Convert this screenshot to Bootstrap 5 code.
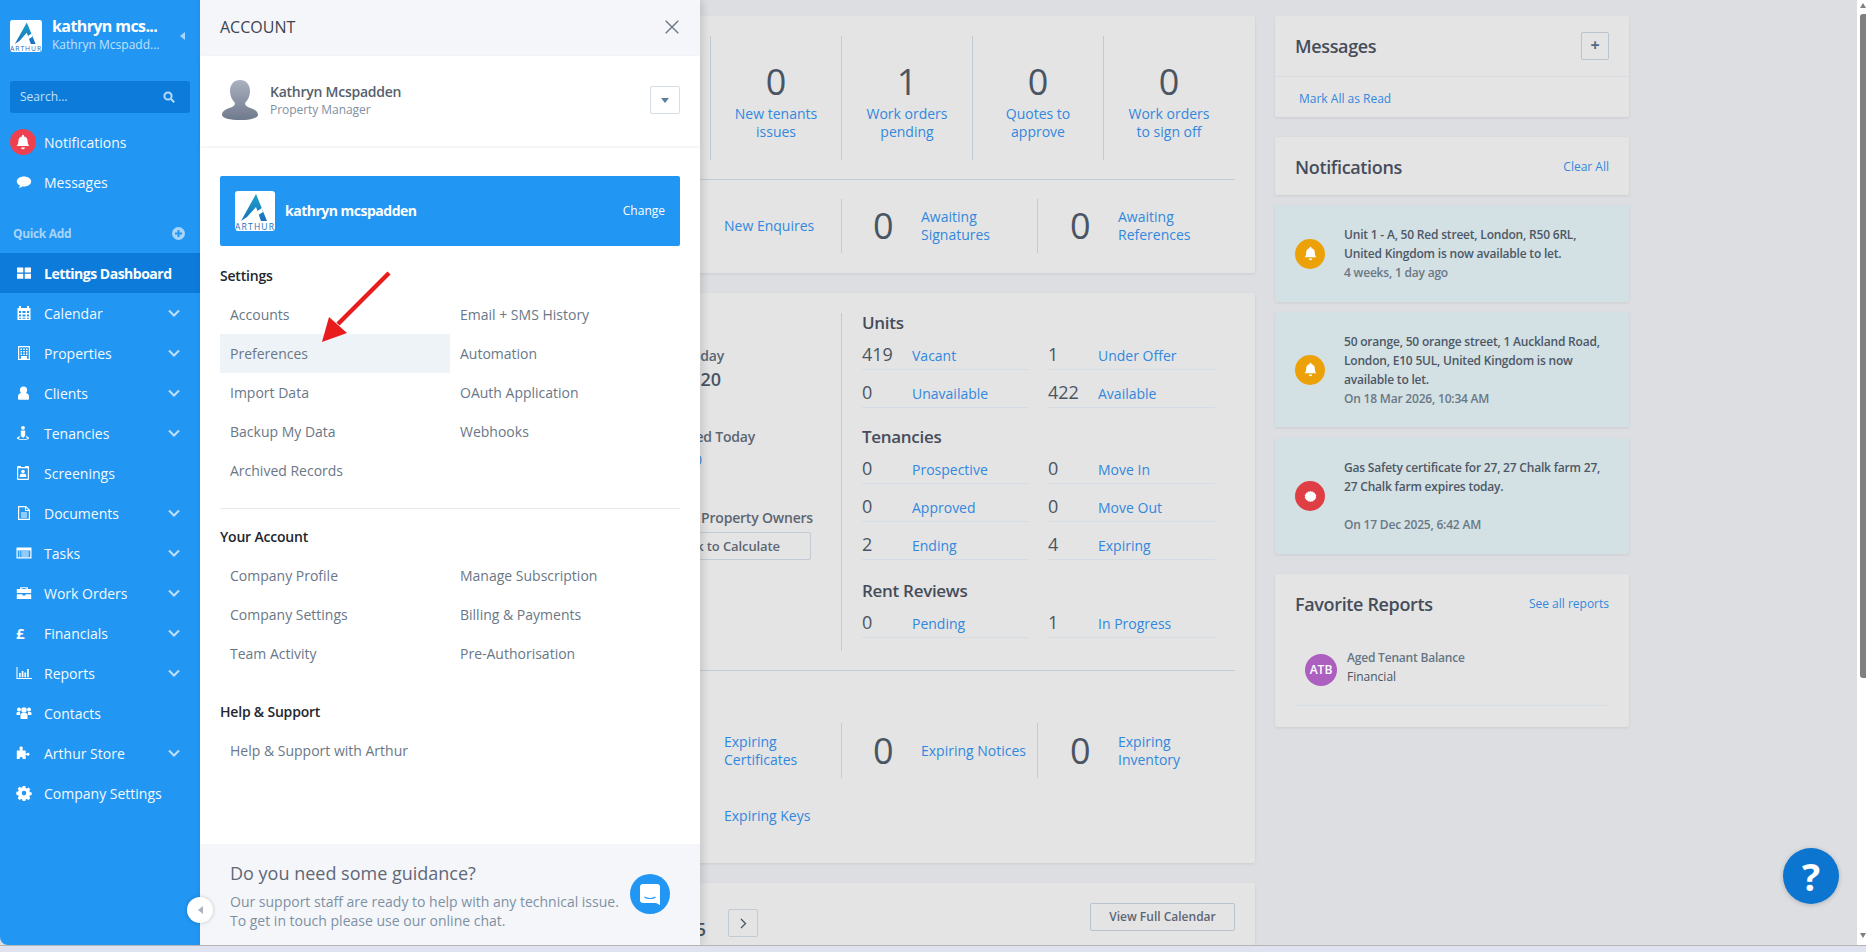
<!DOCTYPE html>
<html lang="en">
<head>
<meta charset="utf-8">
<title>Lettings Dashboard</title>
<link href="https://cdn.jsdelivr.net/npm/bootstrap@5.3.0/dist/css/bootstrap.min.css" rel="stylesheet">
<style>
html,body{height:100%;overflow:hidden}
body{background:#dfe3f0;font-family:"Open Sans","Liberation Sans",sans-serif;font-size:14px;color:#4a5462}
a{text-decoration:none}
.app-shell{height:946px;border-bottom:1px solid #b5b5b5;background:#dcdee1;position:relative;overflow:hidden}
.side-nav{width:200px;height:945px;background:#2196f3;border-bottom-left-radius:8px;color:#f4faff;flex:none}
.brand-row{height:81px;padding:20px 0 0 10px}
.brand-name{font-size:16px;font-weight:700;line-height:20px;margin-top:-4px;color:#fff;letter-spacing:-.6px}
.brand-sub{font-size:12px;line-height:18px;color:#c2e2fb}
.brand-text{margin-left:10px;width:120px}
.side-caret{width:0;height:0;border:4px solid transparent;border-right:5px solid #a9d6fa;border-left:0;margin:12px 0 0 8px}
.side-search{margin:0 10px;height:32px;background:#0c7bd9;border-radius:3px;padding:0 15px 0 10px;font-size:12px;color:#c2e2fb}
.side-item{height:40px;padding-left:16px;color:#f4faff;font-size:14px}
.side-item .ico{width:16px;height:16px;fill:#fff;flex:none;margin-right:12px}
.side-item .chev{width:12px;height:8px;fill:none;stroke:#bfe0fb;stroke-width:2;margin-left:auto;margin-right:20px}
.pound-ico{width:16px;margin-right:12px;font-weight:700;font-size:15px;color:#fff;line-height:16px}
.bell-dot{width:26px;height:26px;border-radius:50%;background:#ef4050;margin:0 8px 0 -6px;flex:none}
.bell-dot svg{width:16px;height:16px;fill:#fff}
.quick-row{height:21px;margin:21px 0 9px;padding:0 15px 0 13px;font-size:12px;font-weight:700;color:#a8d4f8;letter-spacing:-.35px}
.quick-plus{width:13px;height:13px}
.active-item{background:#0c7bd9;font-weight:700;color:#fff;letter-spacing:-.5px}
.gap-notif{padding-top:9px}
.collapse-dot{position:absolute;left:187px;top:897px;width:26px;height:26px;border-radius:50%;background:#fff;box-shadow:0 0 4px rgba(0,0,0,.2);z-index:20}
.collapse-dot i{display:block;width:0;height:0;border:4px solid transparent;border-right:5px solid #a9b2bd;border-left:0}
.account-pane{position:absolute;left:200px;top:0;width:500px;height:945px;background:#fff;z-index:10;box-shadow:3px 0 8px rgba(0,0,0,.13)}
.pane-head{height:56px;background:#f5f6fa;padding:0 21px 3px 20px;font-size:16px;color:#3d4350}
.close-x{width:14px;height:14px;stroke:#6e7683;stroke-width:1.4;fill:none}
.pane-user{height:90px;padding:0 20px 2px 22px;box-shadow:0 1px 3px rgba(0,0,0,.07)}
.user-pic{width:36px;height:40px;margin-right:12px}
.user-name{font-weight:600;font-size:14px;line-height:19px;color:#565f6e;letter-spacing:-.25px}
.user-role{font-size:12px;line-height:17px;color:#7e90a2;letter-spacing:-.05px}
.drop-btn{width:30px;height:28px;border:1px solid #d5dde6;border-radius:2px}
.drop-btn i{width:0;height:0;border:4.5px solid transparent;border-top:5px solid #5f7d99;border-bottom:0}
.org-banner{margin:30px 20px 0;height:70px;background:#2196f3;border-radius:2px;padding:0 15px;color:#fff}
.org-name{font-weight:700;margin:-2px 0 0 10px;letter-spacing:-.5px}
.org-change{margin-left:auto;font-size:12px}
.pane-body{padding:0 20px}
.pane-title{font-weight:600;color:#22262d;line-height:20px;letter-spacing:-.2px}
.settings-title{margin-top:20px}
.link-grid{margin-top:9px}
.pane-link{height:39px;padding-left:10px;color:#6a7787;width:230px}
.pane-link.is-hover{background:#edf3f7}
.pane-rule{margin:18px 0 18px;border-top:1px solid #e4e8ec}
.help-title{margin-top:29px}
.help-link{margin-top:9px}
.pane-foot{height:101px;background:#f5f6fa;padding:16px 30px 0 30px;position:absolute;left:0;right:0;bottom:0}
.foot-title{font-size:18px;line-height:26px;color:#5f6877}
.foot-text{font-size:14px;line-height:19px;color:#7e91a3;margin-top:6px;white-space:nowrap}
.chat-dot{width:40px;height:40px;border-radius:50%;background:#2196f3;margin-top:14px}
.mark-arrow{position:absolute;left:310px;top:262px;width:90px;height:90px;z-index:15}
.dash-area{padding:16px 0 0 16px;gap:20px}
.panel-box{background:#e4e4e4;border-radius:2px;box-shadow:0 1px 3px rgba(0,0,0,.08)}
.main-col{width:1039px;flex:none;gap:20px}
.tile-row{height:124px;margin-right:1px}
.tile-cell{width:131px;border-left:1px solid #c2cad6;text-align:center;padding-top:23px;flex:none}
.big-num{font-size:36px;font-weight:400;line-height:46px;color:#4a5462}
.blue-link{color:#3288de;line-height:18px}
.box-rule{border-top:1px solid #c2cad6;margin:19px 0}
.stat-row{height:54px}
.stat-lead{width:605px;padding-left:488px;flex:none}
.stat-cell{border-left:1px solid #c2cad6;padding-left:32px}
.stat-cell .big-num{width:48px;flex:none}
.w-196{width:196px;flex:none;padding-left:31px}
.left-figs{width:605px;height:338px;flex:none;text-align:right}
.fig-label{font-weight:600;line-height:20px;color:#5d6673;letter-spacing:-.2px}
.fig-value{font-size:18px;font-weight:600;line-height:24px;color:#4a5462}
.fig-a{margin-top:33px;padding-right:117px}
.fig-b{padding-right:120px;margin-top:1px}
.fig-c{margin-top:36px;padding-right:86px}
.fig-d{margin-top:3px;padding-right:139px;line-height:20px}
.fig-e{margin-top:38px;padding-right:28px}
.fig-f{margin:4px 30px 0 0;width:220px;height:28px;border:1px solid #c2cad6;border-radius:2px;padding:0 30px 0 0;font-size:13px;font-weight:600;line-height:26px;color:#5d6673;margin-left:auto;letter-spacing:-.1px}
.right-figs{border-left:1px solid #c2cad6;padding:1px 0 0 20px;width:395px;height:338px}
.sec-head{font-size:17px;font-weight:600;line-height:18px;color:#454d5a;letter-spacing:-.3px}
.sec-grid{display:grid;grid-template-columns:166px 167px;column-gap:20px}
.sec-top{margin-top:20px}
.sec-last{margin:22px 0 0}
.sec-row{height:38px;border-bottom:1px solid #d5dce4;padding-top:10px;display:flex;align-items:baseline}
.sec-row b{font-size:18px;font-weight:400;width:50px;flex:none;line-height:24px;color:#4a5462}
.bottom-row{height:55px;margin-top:52px}
.keys-line{padding-left:488px;margin-top:27px;padding-bottom:37px}
.cal-box{padding:20px;height:120px}
.cal-date{width:470px;text-align:right;font-size:18px;font-weight:600;margin-top:14px;line-height:24px}
.cal-next{width:30px;height:28px;border:1px solid #c2cad6;border-radius:2px;margin:6px 0 0 22px;color:#4a5462}
.cal-next svg{width:7px;height:11px;stroke:#4a5462;fill:none;stroke-width:1.3}
.cal-view{width:145px;height:28px;border:1px solid #b9c2cd;border-radius:2px;font-size:12px;font-weight:600;color:#5d6673;margin-left:auto}
.right-col{width:354px;flex:none}
.box-head{height:61px;padding:0 20px;border-bottom:1px solid #d9dde2}
.box-title{font-size:18px;font-weight:600;color:#454d5a;letter-spacing:-.35px}
.plus-btn{width:28px;height:28px;border:1px solid #b9c4d0;border-radius:2px;color:#4f6d8a;font-weight:700;font-size:16px;line-height:24px}
.mini-link{font-size:12px;color:#3288de}
.mark-line{height:40px;padding:3px 0 0 24px}
.note-box{margin-top:20px;padding:2px 20px 0;height:58px}
.note-card{background:#d3e0e4;border-radius:2px;box-shadow:0 1px 3px rgba(0,0,0,.08);margin-top:10px;padding:0 20px;gap:19px;font-size:12px;line-height:19px;font-weight:600;color:#4d5866;letter-spacing:-.2px}
.note-dot{width:30px;height:30px;border-radius:50%;flex:none}
.note-dot svg{width:15px;height:15px;fill:#fff}
.note-dot svg.burst{width:13px;height:13px}
.dot-amber{background:#eba107}
.dot-red{background:#e03e45}
.note-time{color:#6a7885}
.gap-time{margin-top:19px}
.h-97{height:97px}.h-115{height:115px}.h-116{height:116px;margin-top:11px}
.fav-box{margin-top:20px;height:153px;padding:0 20px}
.fav-head{height:60px}
.fav-item{height:72px;border-bottom:1px solid #d5dce4;padding-left:10px}
.fav-ava{width:32px;height:32px;border-radius:50%;background:#ad5fbf;color:#fff;font-size:12px;font-weight:600;margin-right:10px}
.fav-copy{margin-top:-6px}
.fav-name{font-size:12px;font-weight:600;color:#667585;line-height:19px;letter-spacing:-.2px}
.fav-type{font-size:12px;line-height:19px;color:#4a5462}
.help-fab{position:absolute;left:1783px;top:848px;width:56px;height:56px;border-radius:50%;background:#0b75d0;color:#fff;font-size:38px;font-weight:700;z-index:5;box-shadow:0 1px 5px rgba(0,0,0,.2)}
.fake-bar{position:absolute;right:0;top:0;bottom:0;width:9px;background:#fff;z-index:6}
.bar-thumb{position:absolute;left:3px;right:0;top:14px;height:664px;background:#808080;border-radius:3px 0 0 3px}
.bar-up,.bar-down{position:absolute;right:0;width:0;height:0;border:3px solid transparent}
.bar-up{top:3px;border-bottom:5px solid #808080;border-top:0}
.bar-down{top:933px;border-top:5px solid #808080;border-bottom:0}
</style>
</head>
<body>
<div class="app-shell d-flex">

<nav class="side-nav d-flex flex-column">
  <div class="brand-row d-flex">
    <svg width="32" height="32" viewBox="0 0 40 40"><defs><linearGradient id="lg" x1="0" y1="0" x2="0" y2="1"><stop offset="0" stop-color="#1aa3c9"/><stop offset="1" stop-color="#1b6fc0"/></linearGradient></defs><rect width="40" height="40" rx="3" fill="#fff"/><path d="M21 3 32 30H26L21 16 12 26 6 30Z" fill="url(#lg)"/><path d="M9 29 27 17 28 21 14 30Z" fill="#fff"/><text x="0" y="38.500" font-size="8.500" fill="#1b6fc0" font-family="Open Sans" textLength="39">ARTHUR</text></svg>
    <div class="brand-text"><div class="brand-name">kathryn mcs...</div><div class="brand-sub">Kathryn Mcspadd...</div></div>
    <i class="side-caret"></i>
  </div>
  <div class="side-search d-flex align-items-center justify-content-between"><span>Search...</span>
    <svg width="12" height="12" viewBox="0 0 12 12" fill="none" stroke="#b6dcfa" stroke-width="2"><circle cx="5" cy="5" r="3.6"/><path d="M8 8l3.2 3.2"/></svg></div>
  <div class="gap-notif">
    <a class="side-item d-flex align-items-center" href="#"><span class="bell-dot d-flex align-items-center justify-content-center"><svg viewBox="0 0 16 16"><path d="M8 .8a1 1 0 0 1 1 1v.7a4.6 4.6 0 0 1 3.6 4.6c0 3 .9 4.2 1.9 5H1.500c1-.8 1.900-2 1.900-5A4.600 4.600 0 0 1 7 2.500v-.7a1 1 0 0 1 1-1zM6.100 13.400h3.800a1.900 1.900 0 0 1-3.800 0z"/></svg></span>Notifications</a>
    <a class="side-item d-flex align-items-center" href="#"><svg class="ico" viewBox="0 0 16 16"><path d="M8 2.500c4 0 7.200 2.200 7.200 5s-3.200 5-7.200 5c-.6 0-1.100 0-1.600-.1-1 .9-2.300 1.400-3.800 1.600.8-.8 1.200-1.600 1.300-2.500C2 10.600.8 9.200.8 7.500c0-2.800 3.200-5 7.200-5z"/></svg>Messages</a>
  </div>
  <div class="quick-row d-flex align-items-center justify-content-between"><span>Quick Add</span>
    <svg class="quick-plus" viewBox="0 0 13 13"><circle cx="6.500" cy="6.500" r="6.500" fill="#a8d4f8"/><path d="M3 6.500h7M6.500 3v7" stroke="#2196f3" stroke-width="2"/></svg></div>
  <a class="side-item active-item d-flex align-items-center" href="#"><svg class="ico" viewBox="0 0 16 16"><path d="M1 2.500h6.300v5H1zM8.700 2.500H15v5H8.700zM1 8.800h6.300v5H1zM8.700 8.800H15v5H8.700z"/></svg>Lettings Dashboard</a>
  <a class="side-item d-flex align-items-center" href="#"><svg class="ico" viewBox="0 0 16 16"><path fill-rule="evenodd" d="M3 1h2v2h6V1h2v2h1.500v12h-13V3H3zM3 6v2h2V6zm3.500 0v2h3V6zM11 6v2h2V6zM3 9.500v2h2v-2zm3.500 0v2h3v-2zm4.500 0v2h2v-2zM3 12.700v1h2v-1zm3.500 0v1h3v-1zm4.500 0v1h2v-1z"/></svg>Calendar<svg class="chev" viewBox="0 0 12 8"><path d="M1 1.500l5 5 5-5"/></svg></a>
  <a class="side-item d-flex align-items-center" href="#"><svg class="ico" viewBox="0 0 16 16"><path fill-rule="evenodd" d="M2 1h12v14H2zm1.200 1.200v11.600h9.600V2.200zM4.500 3.500h1.500V5H4.500zm2.700 0h1.600V5H7.200zm2.800 0h1.500V5H10zM4.500 6h1.500v1.500H4.500zm2.700 0h1.600v1.500H7.200zM10 6h1.500v1.500H10zM4.500 8.500h1.500V10H4.500zm2.700 0h1.600V10H7.200zm2.800 0h1.500V10H10zM5 11h6v2.800H5z"/></svg>Properties<svg class="chev" viewBox="0 0 12 8"><path d="M1 1.500l5 5 5-5"/></svg></a>
  <a class="side-item d-flex align-items-center" href="#"><svg class="ico" viewBox="0 0 16 16"><circle cx="7.500" cy="5" r="3.600"/><path d="M2 14v-2.500C2 9.300 3.600 8 5.500 8h4C11.400 8 13 9.300 13 11.500V14c0 .5-.3.800-.8.800H2.800C2.300 14.800 2 14.500 2 14z"/></svg>Clients<svg class="chev" viewBox="0 0 12 8"><path d="M1 1.500l5 5 5-5"/></svg></a>
  <a class="side-item d-flex align-items-center" href="#"><svg class="ico" viewBox="0 0 16 16"><circle cx="7" cy="2.800" r="1.900"/><path d="M4.800 5.500h4.400v6H8v1H6v-1H4.800z"/><path d="M4 11.300C2.300 11.700 1 12.400 1 13.300c0 1 2.700 1.800 6 1.800s6-.8 6-1.800c0-.9-1.300-1.600-3-2v1c.8.200 1.500.5 1.500 1 0 .5-2 1-4.500 1s-4.500-.5-4.500-1c0-.5.700-.8 1.500-1z"/></svg>Tenancies<svg class="chev" viewBox="0 0 12 8"><path d="M1 1.500l5 5 5-5"/></svg></a>
  <a class="side-item d-flex align-items-center" href="#"><svg class="ico" viewBox="0 0 16 16"><path fill-rule="evenodd" d="M2 1h3v1h4V1h3a1 1 0 0 1 1 1v12a1 1 0 0 1-1 1H2a1 1 0 0 1-1-1V2a1 1 0 0 1 1-1zm.200 2.300v10.500h9.600V3.300z"/><circle cx="7" cy="6.500" r="1.800"/><path d="M3.800 12v-1.500c0-1 .8-1.700 1.700-1.700h3c.9 0 1.700.7 1.700 1.700V12z"/></svg>Screenings</a>
  <a class="side-item d-flex align-items-center" href="#"><svg class="ico" viewBox="0 0 16 16"><path fill-rule="evenodd" d="M2 1h8l4 4v10H2zm1.200 1.200v11.600h9.600V6H9V2.200zM10 2.700V5h2.300zM5 7.500h6v1H5zm0 2h6v1H5zm0 2h6v1H5z"/></svg>Documents<svg class="chev" viewBox="0 0 12 8"><path d="M1 1.500l5 5 5-5"/></svg></a>
  <a class="side-item d-flex align-items-center" href="#"><svg class="ico" viewBox="0 0 16 16"><path fill-rule="evenodd" d="M.5 2.500h15v11H.5zm1.200 3v6.800h12.600V5.500zM3 6.500h1.300v1H3zm2.300 0h7.500v1H5.300zM3 8.500h1.300v1H3zm2.300 0h7.500v1H5.300zM3 10.400h1.300v1H3zm2.300 0h7.500v1H5.300z"/></svg>Tasks<svg class="chev" viewBox="0 0 12 8"><path d="M1 1.500l5 5 5-5"/></svg></a>
  <a class="side-item d-flex align-items-center" href="#"><svg class="ico" viewBox="0 0 16 16"><path fill-rule="evenodd" d="M5 2.200h6a1 1 0 0 1 1 1V4h3.200v4H.8V4H4v-.8a1 1 0 0 1 1-1zm.500 1V4h5v-.8zM.8 9.200h5.700v1.300h3V9.200h5.700V14H.8z"/></svg>Work Orders<svg class="chev" viewBox="0 0 12 8"><path d="M1 1.500l5 5 5-5"/></svg></a>
  <a class="side-item d-flex align-items-center" href="#"><span class="pound-ico">£</span>Financials<svg class="chev" viewBox="0 0 12 8"><path d="M1 1.500l5 5 5-5"/></svg></a>
  <a class="side-item d-flex align-items-center" href="#"><svg class="ico" viewBox="0 0 16 16"><path d="M.5 2h1v11h14.500v1H.5zM3 8h1.700v4.300H3zM5.700 6h1.700v6.300H5.700zM8.400 7.500h1.700v4.800H8.400zM11.100 4h1.700v8.300h-1.700z"/></svg>Reports<svg class="chev" viewBox="0 0 12 8"><path d="M1 1.500l5 5 5-5"/></svg></a>
  <a class="side-item d-flex align-items-center" href="#"><svg class="ico" viewBox="0 0 16 16"><circle cx="3" cy="4.500" r="2"/><circle cx="13" cy="4.500" r="2"/><circle cx="8" cy="5" r="2.700"/><path d="M.5 10V8.200C.5 7.300 1.200 7 2 7h2.200c-.3 1-.3 2-.2 3H.5zM15.500 10V8.200c0-.9-.7-1.200-1.500-1.200h-2.200c.3 1 .3 2 .2 3zM4.500 14V9.800c0-1 .8-1.800 1.800-1.800h3.400c1 0 1.800.8 1.800 1.800V14z"/></svg>Contacts</a>
  <a class="side-item d-flex align-items-center" href="#"><svg class="ico" viewBox="0 0 16 16"><path d="M5 1.500c1.100 0 1.900.7 1.900 1.700 0 .5-.3.900-.4 1.300v1h3.200v3h1c.3-.4.700-.7 1.300-.7 1 0 1.500.7 1.500 1.500s-.5 1.500-1.500 1.500c-.6 0-1-.3-1.300-.7h-1V14H6.500v-1.200c0-.5-.5-.8-1.300-.8s-1.400.3-1.400.8V14H.8V5.500h3v-1c-.1-.4-.4-.8-.4-1.300C3.400 2.200 4 1.500 5 1.500z"/></svg>Arthur Store<svg class="chev" viewBox="0 0 12 8"><path d="M1 1.500l5 5 5-5"/></svg></a>
  <a class="side-item d-flex align-items-center" href="#"><svg class="ico" viewBox="0 0 16 16"><path fill-rule="evenodd" d="M6.700 1.500h2.600l.4 1.900 1.200.5 1.600-1 1.800 1.800-1 1.600.5 1.200 1.900.4v2.600l-1.900.4-.5 1.200 1 1.600-1.800 1.800-1.600-1-1.200.5-.4 1.900H6.700l-.4-1.900-1.200-.5-1.600 1-1.800-1.800 1-1.600-.5-1.200L.3 9.900V7.300l1.900-.4.500-1.200-1-1.600 1.800-1.800 1.600 1 1.200-.5zM8 6.300a2.300 2.300 0 1 0 0 4.600 2.300 2.300 0 0 0 0-4.600z" transform="translate(0 -.5)"/></svg>Company Settings</a>
</nav>

<div class="dash-area d-flex flex-grow-1 overflow-hidden align-items-start">
  <div class="main-col d-flex flex-column">
    <section class="panel-box p-0">
      <div class="px-3 mx-1 pt-3 mt-1">
        <div class="tile-row d-flex">
          <div class="flex-grow-1"></div>
          <div class="tile-cell"><div class="big-num">0</div><a class="blue-link d-block" href="#">New tenants<br>issues</a></div>
          <div class="tile-cell"><div class="big-num">1</div><a class="blue-link d-block" href="#">Work orders<br>pending</a></div>
          <div class="tile-cell"><div class="big-num">0</div><a class="blue-link d-block" href="#">Quotes to<br>approve</a></div>
          <div class="tile-cell"><div class="big-num">0</div><a class="blue-link d-block" href="#">Work orders<br>to sign off</a></div>
        </div>
        <div class="box-rule"></div>
        <div class="stat-row d-flex align-items-stretch">
          <div class="stat-lead d-flex align-items-center"><a class="blue-link" href="#">New Enquires</a></div>
          <div class="stat-cell w-196 d-flex align-items-center"><div class="big-num">0</div><a class="blue-link" href="#">Awaiting<br>Signatures</a></div>
          <div class="stat-cell flex-grow-1 d-flex align-items-center"><div class="big-num">0</div><a class="blue-link" href="#">Awaiting<br>References</a></div>
        </div>
        <div class="pb-3 mb-1"></div>
      </div>
    </section>

    <section class="panel-box">
      <div class="px-3 mx-1 pt-3 mt-1">
        <div class="d-flex">
          <div class="left-figs">
            <div class="fig-label fig-a">Rent Due Today</div>
            <div class="fig-value fig-b">£1,220</div>
            <div class="fig-label fig-c">Rent Received Today</div>
            <a class="blue-link d-block fig-d" href="#">£0</a>
            <div class="fig-label fig-e">Property Owners</div>
            <div class="fig-f">Click to Calculate</div>
          </div>
          <div class="right-figs">
            <div class="sec-head">Units</div>
            <div class="sec-grid">
              <div class="sec-row"><b>419</b><a class="blue-link" href="#">Vacant</a></div>
              <div class="sec-row"><b>1</b><a class="blue-link" href="#">Under Offer</a></div>
              <div class="sec-row"><b>0</b><a class="blue-link" href="#">Unavailable</a></div>
              <div class="sec-row"><b>422</b><a class="blue-link" href="#">Available</a></div>
            </div>
            <div class="sec-head sec-top">Tenancies</div>
            <div class="sec-grid">
              <div class="sec-row"><b>0</b><a class="blue-link" href="#">Prospective</a></div>
              <div class="sec-row"><b>0</b><a class="blue-link" href="#">Move In</a></div>
              <div class="sec-row"><b>0</b><a class="blue-link" href="#">Approved</a></div>
              <div class="sec-row"><b>0</b><a class="blue-link" href="#">Move Out</a></div>
              <div class="sec-row"><b>2</b><a class="blue-link" href="#">Ending</a></div>
              <div class="sec-row"><b>4</b><a class="blue-link" href="#">Expiring</a></div>
            </div>
            <div class="sec-head sec-last">Rent Reviews</div>
            <div class="sec-grid">
              <div class="sec-row"><b>0</b><a class="blue-link" href="#">Pending</a></div>
              <div class="sec-row"><b>1</b><a class="blue-link" href="#">In Progress</a></div>
            </div>
          </div>
        </div>
        <div class="box-rule mb-0"></div>
        <div class="bottom-row stat-row d-flex align-items-stretch">
          <div class="stat-lead d-flex align-items-center"><a class="blue-link" href="#">Expiring<br>Certificates</a></div>
          <div class="stat-cell w-196 d-flex align-items-center"><div class="big-num">0</div><a class="blue-link" href="#">Expiring Notices</a></div>
          <div class="stat-cell flex-grow-1 d-flex align-items-center"><div class="big-num">0</div><a class="blue-link" href="#">Expiring<br>Inventory</a></div>
        </div>
        <div class="keys-line"><a class="blue-link" href="#">Expiring Keys</a></div>
      </div>
    </section>

    <section class="panel-box cal-box d-flex align-items-start">
      <div class="cal-date flex-shrink-0">December 2025</div>
      <div class="cal-next d-flex align-items-center justify-content-center"><svg viewBox="0 0 7 11"><path d="M1 1l4.500 4.500L1 10"/></svg></div>
      <div class="cal-view d-flex align-items-center justify-content-center">View Full Calendar</div>
    </section>
  </div>

  <aside class="right-col">
    <section class="panel-box">
      <div class="box-head d-flex align-items-center justify-content-between"><span class="box-title">Messages</span><span class="plus-btn text-center">+</span></div>
      <div class="mark-line d-flex align-items-center"><a class="mini-link" href="#">Mark All as Read</a></div>
    </section>
    <section class="panel-box note-box d-flex align-items-center justify-content-between"><span class="box-title">Notifications</span><a class="mini-link" href="#">Clear All</a></section>
    <div class="note-card h-97 d-flex align-items-center">
      <span class="note-dot dot-amber d-flex align-items-center justify-content-center"><svg viewBox="0 0 16 16"><path d="M8 .8a1 1 0 0 1 1 1v.7a4.600 4.600 0 0 1 3.600 4.600c0 3 .9 4.200 1.900 5H1.500c1-.8 1.900-2 1.900-5A4.600 4.600 0 0 1 7 2.500v-.7a1 1 0 0 1 1-1zM6.100 13.400h3.800a1.900 1.900 0 0 1-3.800 0z"/></svg></span>
      <div>Unit 1 - A, 50 Red street, London, R50 6RL,<br>United Kingdom is now available to let.<div class="note-time">4 weeks, 1 day ago</div></div>
    </div>
    <div class="note-card h-115 d-flex align-items-center">
      <span class="note-dot dot-amber d-flex align-items-center justify-content-center"><svg viewBox="0 0 16 16"><path d="M8 .8a1 1 0 0 1 1 1v.7a4.600 4.600 0 0 1 3.600 4.600c0 3 .9 4.200 1.900 5H1.500c1-.8 1.900-2 1.900-5A4.600 4.600 0 0 1 7 2.500v-.7a1 1 0 0 1 1-1zM6.100 13.400h3.800a1.900 1.900 0 0 1-3.800 0z"/></svg></span>
      <div>50 orange, 50 orange street, 1 Auckland Road,<br>London, E10 5UL, United Kingdom is now<br>available to let.<div class="note-time">On 18 Mar 2026, 10:34 AM</div></div>
    </div>
    <div class="note-card h-116 d-flex align-items-center">
      <span class="note-dot dot-red d-flex align-items-center justify-content-center"><svg class="burst" viewBox="1 1 14 14"><path d="M8 2l1.200 1 1.500-.5.700 1.400 1.500.2.100 1.600 1.300.8-.6 1.500.6 1.500-1.300.8-.1 1.600-1.500.2-.7 1.400-1.500-.5L8 14l-1.200-1-1.500.5-.7-1.400-1.500-.2-.1-1.600-1.300-.8.600-1.500-.6-1.500 1.300-.8.100-1.600 1.500-.2.700-1.400 1.500.5z"/></svg></span>
      <div>Gas Safety certificate for 27, 27 Chalk farm 27,<br>27 Chalk farm expires today.<div class="note-time gap-time">On 17 Dec 2025, 6:42 AM</div></div>
    </div>
    <section class="panel-box fav-box">
      <div class="fav-head d-flex align-items-center justify-content-between"><span class="box-title">Favorite Reports</span><a class="mini-link" href="#">See all reports</a></div>
      <div class="fav-item d-flex align-items-center">
        <span class="fav-ava d-flex align-items-center justify-content-center">ATB</span>
        <div class="fav-copy"><div class="fav-name">Aged Tenant Balance</div><div class="fav-type">Financial</div></div>
      </div>
    </section>
  </aside>
</div>

<aside class="account-pane">
  <div class="pane-head d-flex align-items-center justify-content-between"><span>ACCOUNT</span>
    <svg class="close-x" viewBox="0 0 14 14"><path d="M.7.700l12.600 12.600M13.300.700.700 13.300"/></svg></div>
  <div class="pane-user d-flex align-items-center">
    <svg class="user-pic" viewBox="0 0 36 40"><defs><linearGradient id="ug" x1="0" y1="0" x2="0" y2="1"><stop offset="0" stop-color="#aab1bf"/><stop offset="1" stop-color="#6f7a8d"/></linearGradient></defs><path d="M18 0c6 0 10 4.500 10 11 0 5-2 9-5 12 0 2 1 3 4 4.500 5 1.500 9 3.500 9 7.500 0 3-8 5-18 5S0 38 0 35c0-4 4-6 9-7.500 3-1.500 4-2.500 4-4.500-3-3-5-7-5-12C8 4.500 12 0 18 0z" fill="url(#ug)"/></svg>
    <div><div class="user-name">Kathryn Mcspadden</div><div class="user-role">Property Manager</div></div>
    <span class="drop-btn ms-auto d-flex align-items-center justify-content-center"><i></i></span>
  </div>
  <div class="org-banner d-flex align-items-center">
    <svg width="40" height="40" viewBox="0 0 40 40"><rect width="40" height="40" rx="3" fill="#fff"/><path d="M21 3 32 30H26L21 16 12 26 6 30Z" fill="url(#lg)"/><path d="M9 29 27 17 28 21 14 30Z" fill="#fff"/><text x="0" y="38.500" font-size="8.500" fill="#1b6fc0" font-family="Open Sans" textLength="39">ARTHUR</text></svg>
    <span class="org-name">kathryn mcspadden</span><span class="org-change">Change</span>
  </div>
  <div class="pane-body">
    <div class="pane-title settings-title">Settings</div>
    <div class="row g-0 link-grid">
      <div class="col-6"><a class="pane-link d-flex align-items-center" href="#">Accounts</a><a class="pane-link is-hover d-flex align-items-center" href="#">Preferences</a><a class="pane-link d-flex align-items-center" href="#">Import Data</a><a class="pane-link d-flex align-items-center" href="#">Backup My Data</a><a class="pane-link d-flex align-items-center" href="#">Archived Records</a></div>
      <div class="col-6"><a class="pane-link d-flex align-items-center" href="#">Email + SMS History</a><a class="pane-link d-flex align-items-center" href="#">Automation</a><a class="pane-link d-flex align-items-center" href="#">OAuth Application</a><a class="pane-link d-flex align-items-center" href="#">Webhooks</a></div>
    </div>
    <div class="pane-rule"></div>
    <div class="pane-title">Your Account</div>
    <div class="row g-0 link-grid">
      <div class="col-6"><a class="pane-link d-flex align-items-center" href="#">Company Profile</a><a class="pane-link d-flex align-items-center" href="#">Company Settings</a><a class="pane-link d-flex align-items-center" href="#">Team Activity</a></div>
      <div class="col-6"><a class="pane-link d-flex align-items-center" href="#">Manage Subscription</a><a class="pane-link d-flex align-items-center" href="#">Billing &amp; Payments</a><a class="pane-link d-flex align-items-center" href="#">Pre-Authorisation</a></div>
    </div>
    <div class="pane-title help-title">Help &amp; Support</div>
    <a class="pane-link d-flex align-items-center help-link" href="#">Help &amp; Support with Arthur</a>
  </div>
  <div class="pane-foot d-flex">
    <div class="flex-grow-1"><div class="foot-title">Do you need some guidance?</div><div class="foot-text">Our support staff are ready to help with any technical issue.<br>To get in touch please use our online chat.</div></div>
    <span class="chat-dot d-flex align-items-center justify-content-center flex-shrink-0"><svg width="20" height="21" viewBox="0 0 20 21"><path d="M3 0h14a3 3 0 0 1 3 3v18l-4-2H3a3 3 0 0 1-3-3V3a3 3 0 0 1 3-3z" fill="#fff"/><path d="M4.500 13c3 2 8 2 11 0" stroke="#2196f3" stroke-width="1.200" fill="none"/></svg></span>
  </div>
</aside>

<svg class="mark-arrow" viewBox="0 0 90 90"><path d="M79 11 28 62" stroke="#e81c1c" stroke-width="4.500"/><path d="M12 80 19 55 37 71Z" fill="#e81c1c"/></svg>
<div class="collapse-dot d-flex align-items-center justify-content-center"><i></i></div>
<div class="help-fab d-flex align-items-center justify-content-center">?</div>
<div class="fake-bar"><i class="bar-up"></i><div class="bar-thumb"></div><i class="bar-down"></i></div>
</div>
<script src="https://cdn.jsdelivr.net/npm/bootstrap@5.3.0/dist/js/bootstrap.bundle.min.js"></script>
</body>
</html>
